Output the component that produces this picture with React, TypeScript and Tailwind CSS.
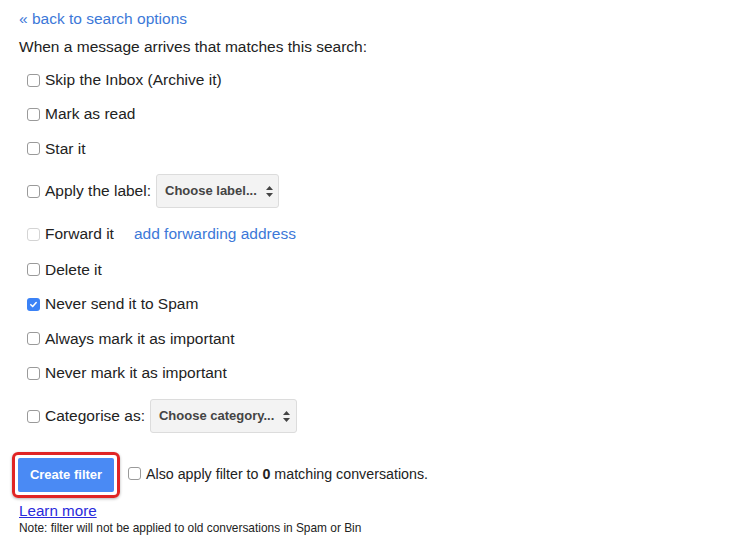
import React from "react";

function Box({ checked = false, disabled = false }: { checked?: boolean; disabled?: boolean }) {
  if (checked) {
    return (
      <span className="inline-flex h-[13px] w-[13px] shrink-0 items-center justify-center rounded-[3px] bg-[#3b82f6]">
        <svg width="9" height="9" viewBox="0 0 10 10">
          <path d="M2 5.2 L4.1 7.3 L8 2.8" fill="none" stroke="white" strokeWidth="1.7" strokeLinecap="round" strokeLinejoin="round" />
        </svg>
      </span>
    );
  }
  return (
    <span
      className={
        disabled
          ? "inline-block h-[13px] w-[13px] shrink-0 rounded-[3px] border border-[#d4d4d4] bg-white"
          : "inline-block h-[13px] w-[13px] shrink-0 rounded-[3px] border border-[#9a9a9a] bg-white"
      }
    />
  );
}

function Arrows() {
  return (
    <svg width="9" height="13" viewBox="0 0 9 13" className="ml-[8px]">
      <path d="M4.5 1 L8 5 L1 5 Z" fill="#444" />
      <path d="M4.5 12 L8 8 L1 8 Z" fill="#444" />
    </svg>
  );
}

function Select({ label, w }: { label: string; w: string }) {
  return (
    <span
      className={`inline-flex h-[34px] items-center rounded-[3px] border border-[#dcdcdc] bg-[#f3f3f3] pl-[8px] text-[13px] font-bold text-[#444] ${w}`}
    >
      {label}
      <Arrows />
    </span>
  );
}

function Row({ h, children }: { h: string; children: React.ReactNode }) {
  return <div className={`flex items-center pl-[8px] ${h}`}>{children}</div>;
}

export default function App() {
  return (
    <div className="h-[540px] w-[750px] bg-white pl-[19px] text-[15.5px] text-[#222]" style={{ fontFamily: '"Liberation Sans", Arial, sans-serif' }}>
      <div className="flex h-[37px] items-center pt-[0px]">
        <span className="text-[#3c78d8]">« back to search options</span>
      </div>
      <div className="flex h-[20px] items-center">When a message arrives that matches this search:</div>
      <div className="h-[6px]" />
      <Row h="h-[34px]">
        <Box />
        <span className="ml-[5px]">Skip the Inbox (Archive it)</span>
      </Row>
      <Row h="h-[34px]">
        <Box />
        <span className="ml-[5px]">Mark as read</span>
      </Row>
      <Row h="h-[35px]">
        <Box />
        <span className="ml-[5px]">Star it</span>
      </Row>
      <Row h="h-[50px]">
        <Box />
        <span className="ml-[5px]">Apply the label:</span>
        <span className="ml-[5px]">
          <Select label="Choose label..." w="w-[123px]" />
        </span>
      </Row>
      <Row h="h-[36px]">
        <Box disabled />
        <span className="ml-[5px]">Forward it</span>
        <span className="ml-[20px] text-[#3c78d8]">add forwarding address</span>
      </Row>
      <Row h="h-[35px]">
        <Box />
        <span className="ml-[5px]">Delete it</span>
      </Row>
      <Row h="h-[34px]">
        <Box checked />
        <span className="ml-[5px]">Never send it to Spam</span>
      </Row>
      <Row h="h-[35px]">
        <Box />
        <span className="ml-[5px]">Always mark it as important</span>
      </Row>
      <Row h="h-[34px]">
        <Box />
        <span className="ml-[5px]">Never mark it as important</span>
      </Row>
      <Row h="h-[52px]">
        <Box />
        <span className="ml-[5px]">Categorise as:</span>
        <span className="ml-[5px]">
          <Select label="Choose category..." w="w-[147px]" />
        </span>
      </Row>
      <div className="flex h-[60px] items-center pt-[6px]">
        <div className="-ml-[7px] rounded-[6px] border-[3px] border-[#e02424] p-[3px] shadow-[0_1px_3px_rgba(0,0,0,0.3)]">
          <div className="flex h-[34px] w-[96px] items-center justify-center rounded-[2px] bg-[#4a8af4] text-[13px] font-bold text-white">
            Create filter
          </div>
        </div>
        <span className="ml-[8px]">
          <Box />
        </span>
        <span className="ml-[5px] text-[14.25px]">
          Also apply filter to <b>0</b> matching conversations.
        </span>
      </div>
      <div className="flex h-[18px] items-center">
        <span className="text-[15.2px] text-[#2a2adb] underline">Learn more</span>
      </div>
      <div className="flex h-[18px] items-center text-[11.9px]">Note: filter will not be applied to old conversations in Spam or Bin</div>
    </div>
  );
}
